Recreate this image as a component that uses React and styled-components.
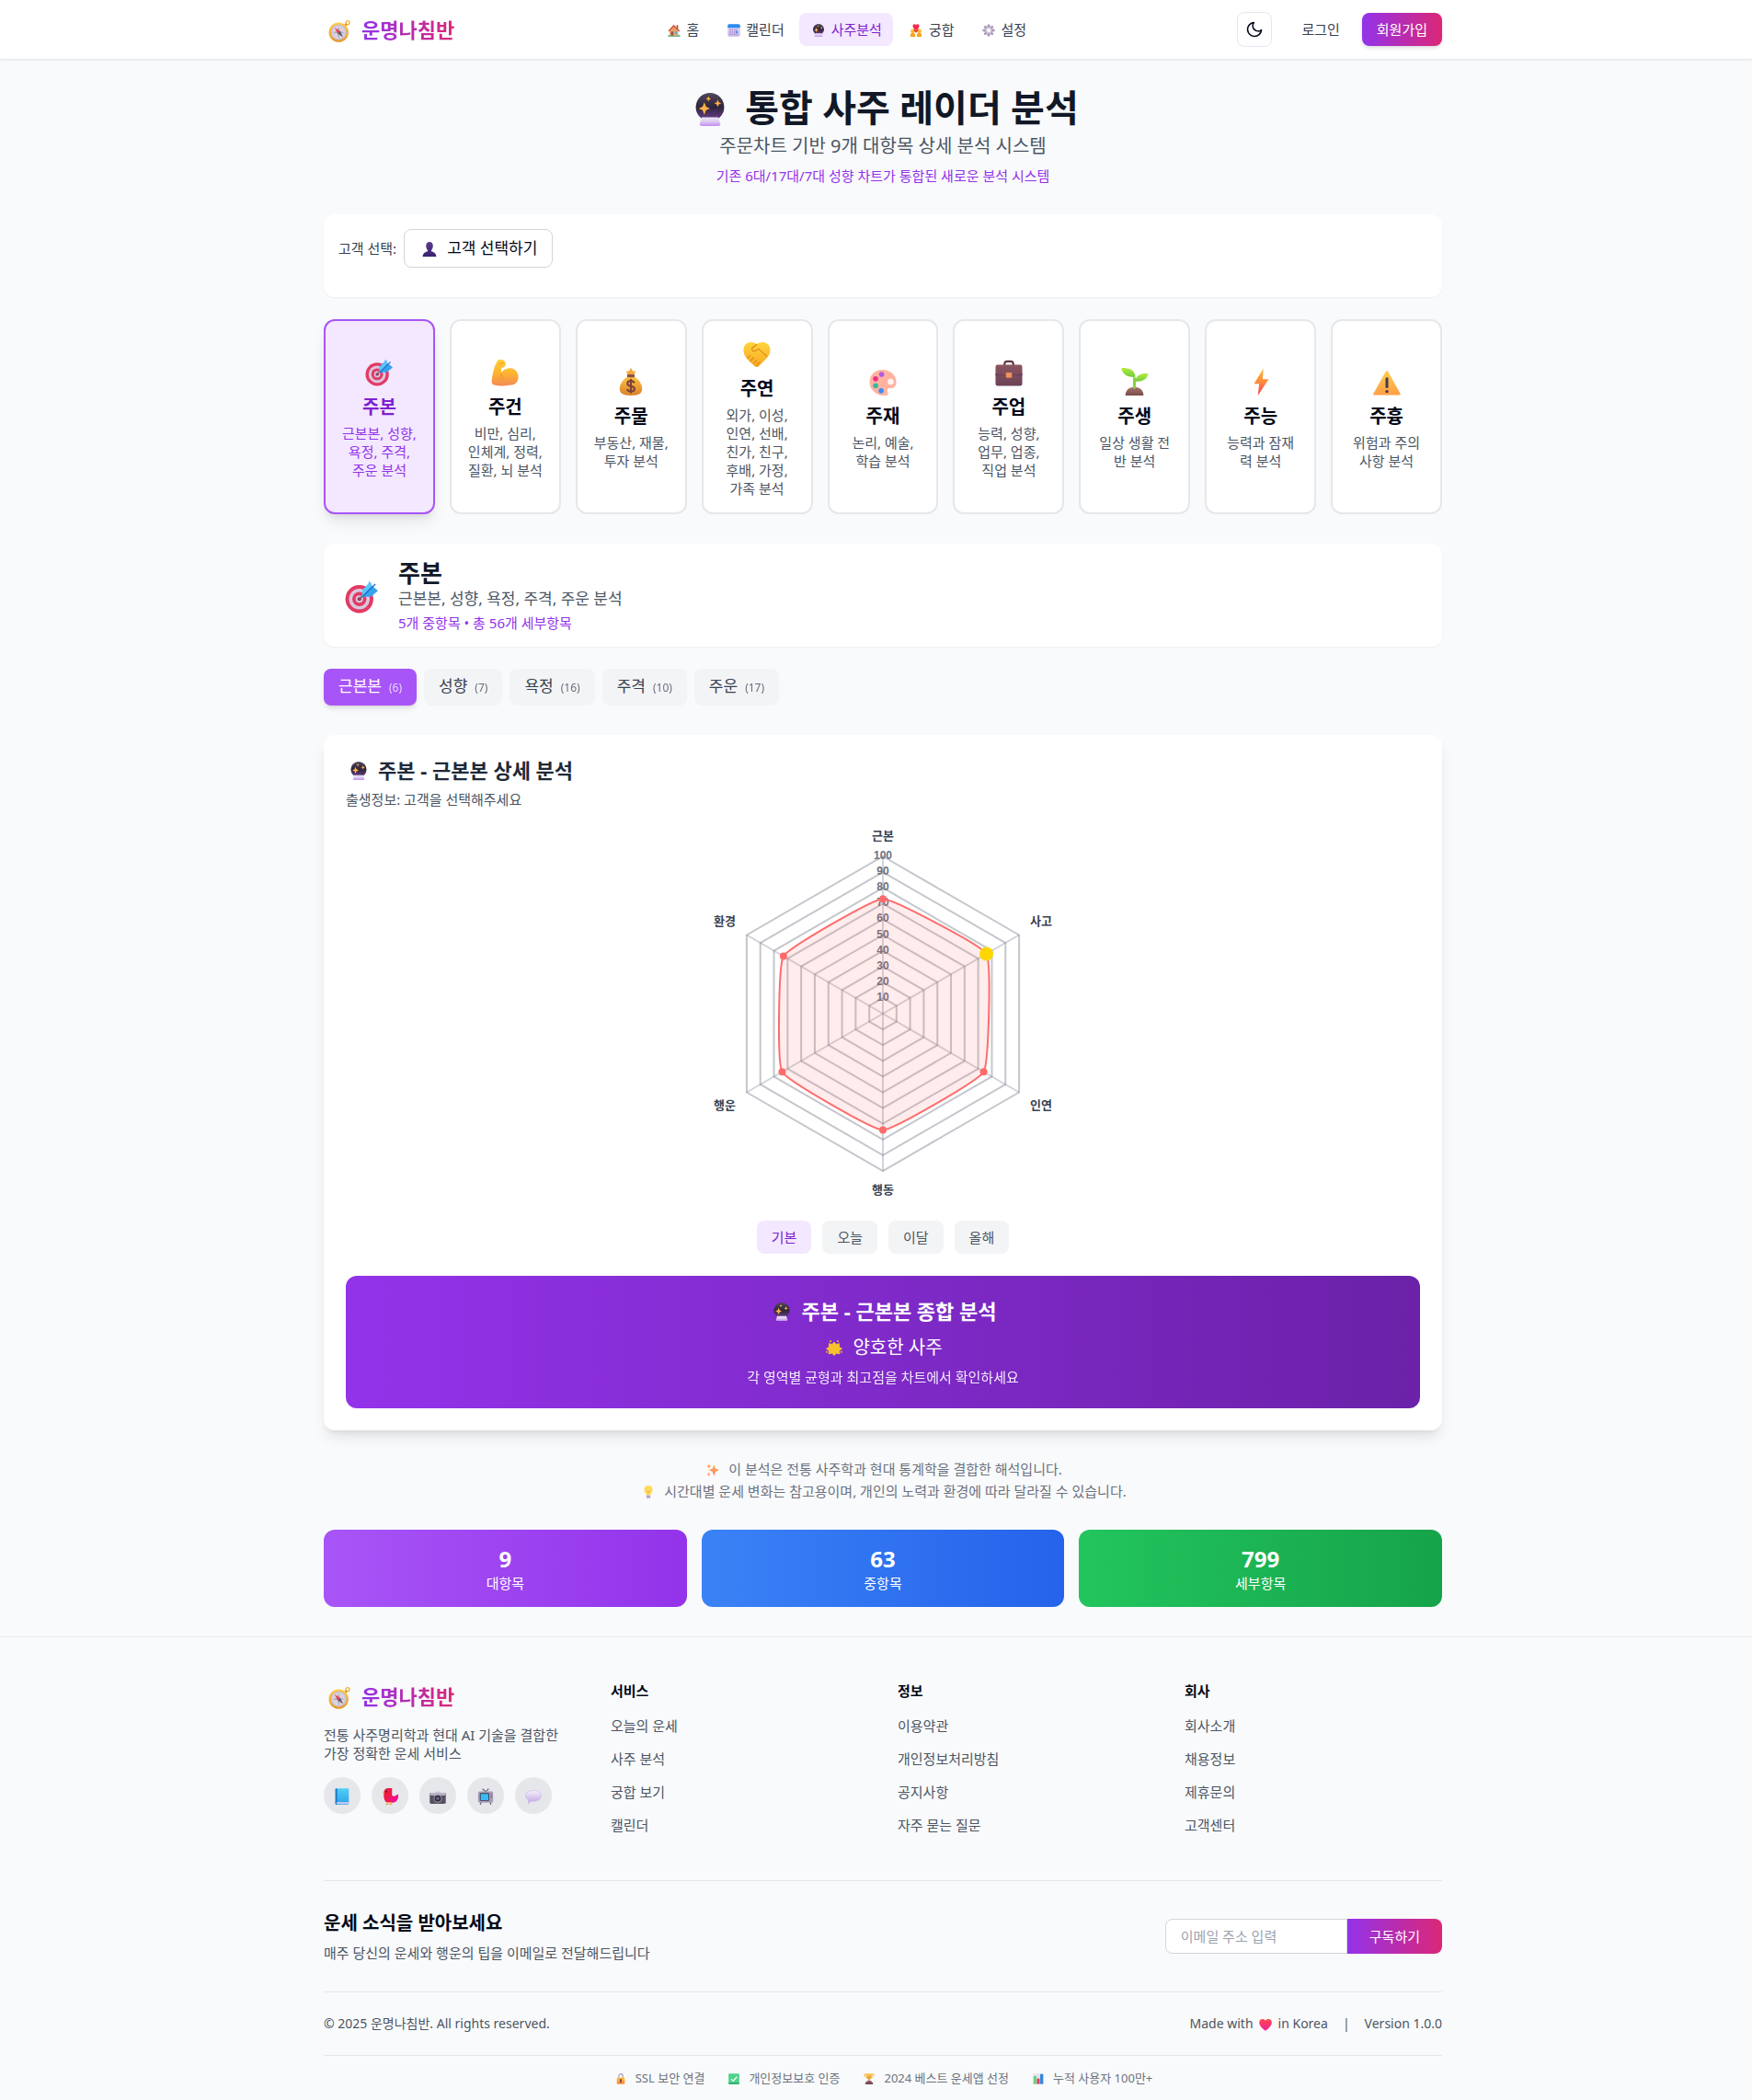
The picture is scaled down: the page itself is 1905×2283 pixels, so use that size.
import React from "react";
import styled, { createGlobalStyle, css } from "styled-components";

const GlobalStyle = createGlobalStyle`
  *, *::before, *::after { box-sizing: border-box; }
  body {
    margin: 0;
    background: #f9fafb;
    color: #020817;
    font-family: "Noto Sans", "Noto Sans CJK KR", sans-serif;
    font-size: 17px;
    line-height: 24px;
  }
  h1, h2, h3, h4, p, ul { margin: 0; padding: 0; }
  ul { list-style: none; }
  a { color: inherit; text-decoration: none; }
  button, input { font: inherit; color: inherit; }
  button { cursor: pointer; border: 0; background: none; padding: 0; }
`;

/* ---------- emoji drawings ---------- */

const gradients = {
  ball: ["#51465c", "#2f253c", "#6f4394"],
  base: ["#f0e8fb", "#dccbf0", "#c08df0"],
  gold: ["#ffc94a", "#e59a2e"],
  hand: ["#ffd43d", "#f9a825"],
  muscle: ["#ffcf3a", "#fdb52e", "#f58a55"],
  bag: ["#ffc240", "#d9822b"],
  flash: ["#ffb92e", "#ff8a3d", "#ee3f56"],
  warn: ["#ffcb4d", "#ff9f45"],
  red: ["#ff4a4a", "#f0209a"],
  leaf: ["#b5ea3c", "#6fcf3a"],
  soil: ["#a8736a", "#7a4d49"],
  book: ["#4fd0f7", "#2f9fea"],
  brief: ["#8b5560", "#6c4158"],
  spark: ["#ffb64a", "#ff8070"],
  bubble: ["#f6f0fc", "#bda3e2"],
  cal: ["#e8e0f6", "#c9b8ea"],
  lock: ["#ffc53d", "#ff8146"],
  person: ["#5b3a8c", "#3a2170"],
};

const GradientSheet = styled.svg`
  position: absolute;
  width: 0;
  height: 0;
`;

const Gradients = () => (
  <GradientSheet aria-hidden="true">
    <defs>
      {Object.entries(gradients).map(([id, stops]) => (
        <linearGradient key={id} id={`g-${id}`} x1="0" y1="0" x2="0" y2="1">
          {stops.map((c, i) => (
            <stop key={c} offset={i / (stops.length - 1)} stopColor={c} />
          ))}
        </linearGradient>
      ))}
    </defs>
  </GradientSheet>
);

const drawings = {
  compass: (
    <>
      <circle cx="28" cy="3.5" r="2.6" fill="none" stroke="#efb23c" strokeWidth="1.8" />
      <path d="M23 9l3.5-3.5" stroke="#d98f2c" strokeWidth="3" />
      <circle cx="15" cy="17.5" r="12.8" fill="#d9d2dc" stroke="url(#g-gold)" strokeWidth="3" />
      <circle cx="15" cy="17.5" r="10.4" fill="none" stroke="#b9aec2" strokeWidth="1" />
      <path d="M15 8.5l1.6 7.4 7.4 1.6-7.4 1.6L15 26.5l-1.6-7.4L6 17.5l7.4-1.6z" fill="#a79db0" />
      <path d="M9 10.5l8.2 5.4-3.6 3.2z" fill="#f03a4f" />
      <path d="M21.500 24.500l-7.900-5.400 3.600-3.200z" fill="#5d5566" />
    </>
  ),
  home: (
    <>
      <rect x="1" y="28" width="30" height="3.500" fill="#3fae7c" />
      <rect x="22" y="3" width="4" height="9" fill="#b0553f" />
      <path d="M5 16L15 5l11 11v13H5z" fill="#e9a26b" />
      <path d="M1 17L15 1.500 30.500 17l-2.500 2.500L15 7 3.500 19.500z" fill="#d4543f" />
      <rect x="8" y="19" width="6" height="10" fill="#9a5340" />
      <rect x="17.500" y="19" width="6" height="6" fill="#4fb8e8" />
    </>
  ),
  calendar: (
    <>
      <rect x="0.500" y="0.500" width="31" height="31" rx="4" fill="url(#g-cal)" />
      <path d="M.5 9.500v-5a4 4 0 014-4h23a4 4 0 014 4v5z" fill="#2b8cf0" />
      <g fill="#a98fd6">
        {[13, 18.500, 24].map((y) => [5, 10.500, 16, 21.500].map((x) => <rect key={`${x}-${y}`} x={x} y={y} width="3.500" height="3.500" />))}
      </g>
      <rect x="21" y="18" width="4.500" height="4.500" fill="#2b8cf0" />
    </>
  ),
  crystal: (
    <>
      <circle cx="16" cy="13.700" r="13.700" fill="url(#g-ball)" />
      <path d="M8 23.500h16l2 6.500q.3 2-2 2H8q-2.300 0-2-2z" fill="url(#g-base)" />
      <g fill="#ffb145">
        <path d="M10.500 9l1.700 4.300 3.800 1.700-3.800 1.700-1.700 4.300-1.700-4.300L5 15l3.800-1.700z" />
        <path d="M23.500 6.500l1 2.500 2.500 1-2.500 1-1 2.500-1-2.500-2.500-1 2.500-1z" />
        <path d="M14.500 3l.8 1.900 1.700.8-1.700.8-.8 1.900-.8-1.900-1.700-.8 1.700-.8z" />
      </g>
    </>
  ),
  couple: (
    <>
      <path d="M16 15C9 11 8 8 8 5.500A4 4 0 0116 4a4 4 0 018 1.500C24 8 23 11 16 15z" fill="#f5264e" />
      <circle cx="8" cy="17.500" r="5.500" fill="url(#g-hand)" />
      <circle cx="24" cy="17.500" r="5.500" fill="url(#g-hand)" />
      <path d="M2 32v-4a6 6 0 0112 0v4zM18 32v-4a6 6 0 0112 0v4z" fill="#f6a31f" />
      <path d="M12 11l4 5 4-5 2 5-6 6-6-6z" fill="#e63a3f" />
    </>
  ),
  gear: (
    <>
      <g fill="#a99bb8">
        {[0, 45, 90, 135].map((a) => (
          <rect key={a} x="13" y="1" width="6" height="30" rx="1.500" transform={`rotate(${a} 16 16)`} />
        ))}
        <circle cx="16" cy="16" r="11" />
      </g>
      <circle cx="16" cy="16" r="8.500" fill="#cdc3d8" />
      <circle cx="16" cy="16" r="4.500" fill="#fff" />
    </>
  ),
  person: (
    <path
      d="M16 0c5 0 7.500 3.500 7.500 8.500 0 4-1.500 7.500-3.500 9.500v2.500c6 1.500 10 4 11 11.500H1c1-7.500 5-10 11-11.500V18c-2-2-3.500-5.500-3.500-9.500C8.500 3.500 11 0 16 0z"
      fill="url(#g-person)"
    />
  ),
  target: (
    <>
      <circle cx="14" cy="18" r="13.500" fill="#e33a63" />
      <circle cx="14" cy="18" r="10" fill="#d9c6de" />
      <circle cx="14" cy="18" r="6.800" fill="#e33a63" />
      <circle cx="14" cy="18" r="3.600" fill="#d9c6de" />
      <circle cx="14" cy="18" r="1.800" fill="#8b2f58" />
      <path d="M13.500 18.500l8-8" stroke="#7a5a78" strokeWidth="1.600" />
      <path d="M16.500 16l.5-7L23 3V.5l2.500 4L32 10l-6.500 5.500z" fill="#36a3ee" />
      <path d="M25.500 1.500L23 3l-6 6-.5 7 9-10z" fill="#5cc4f8" />
      <path d="M17 15.500L29.500 3.500" stroke="#1c6fc9" strokeWidth="1.200" />
    </>
  ),
  muscle: (
    <>
      <path
        d="M8 1.500c3-1.500 7-.5 8.500 2.500 1 2.500.2 5-2 6l-2.500.3-.3 6C14 13 18 10.500 22.500 11 28 11.500 31.500 16 31.500 21S29 29.500 24 30.500c-7 1.200-16 1.200-21.500-.5-2-.8-2-3-1.600-6C2 16 3.500 8 8 1.500z"
        fill="url(#g-muscle)"
      />
      <path d="M11.700 16.300c-.3 3 .8 5.500 3.300 7" stroke="#ec9a25" strokeWidth="1.200" fill="none" />
      <path d="M9 5.500c2.500.5 4.500 0 6-1.500" stroke="#ec9a25" strokeWidth="1.100" fill="none" />
    </>
  ),
  money: (
    <>
      <path d="M10.500 3.500l3 .5L16 0l2.500 4 3-.5-2 5.500h-7z" fill="#f8a73a" />
      <path d="M12 10h8c6 4 9 9 9 14 0 5-3 8-13 8S3 29 3 24c0-5 3-10 9-14z" fill="url(#g-bag)" />
      <rect x="11.500" y="7.500" width="9" height="3.500" rx="1.500" fill="#8d5347" />
      <path
        d="M20 17.500c-.6-1.700-2-2.500-4-2.500-2.300 0-4 1-4 3s1.500 2.600 4 3 4.200 1.200 4.200 3.200-1.800 3-4.200 3c-2.200 0-3.800-.8-4.300-2.700M16 12.800v16.500"
        fill="none"
        stroke="#7a4238"
        strokeWidth="2.200"
      />
    </>
  ),
  handshake: (
    <>
      <path
        d="M9 2c3 0 5 .8 7 2.500C18 2.800 20 2 23 2c5 0 8.500 4 8.500 9 0 4.500-2 7.500-5 10.500L18 30c-1.500 1.300-3 1.300-4.500 0L5 22C2 19 .5 15.500.5 11 .5 6 4 2 9 2z"
        fill="url(#g-hand)"
      />
      <path
        d="M16 4.500L10.500 9c-1 3 1.500 4.500 4 3l3.500-2 9.500 8.500M8 17.500l-2.500 3M12 20l-3.500 4M15.500 23l-3 3.500M19 25.500l-2.500 3"
        fill="none"
        stroke="#e08c14"
        strokeWidth="1.300"
        strokeLinecap="round"
      />
    </>
  ),
  palette: (
    <>
      <path
        d="M15 2c9.500 0 16.500 6 16.500 14 0 5-2.500 7.500-6 7.500-2.500 0-4.500 0-4.500 2.500 0 2 1 2.500 1 4s-1.500 2-4 2C8 32 .5 25 .5 16.500S7 2 15 2z"
        fill="#ffb3a0"
      />
      <circle cx="25" cy="16" r="3.500" fill="#fff6f3" />
      <circle cx="14.500" cy="7.500" r="3" fill="#b05ae8" />
      <circle cx="7.500" cy="12.500" r="3" fill="#ec2f8a" />
      <circle cx="7.500" cy="20.500" r="3" fill="#34b9a0" />
      <circle cx="14" cy="26.500" r="3" fill="#3b8df5" />
    </>
  ),
  briefcase: (
    <>
      <path d="M11 8V5.500A3 3 0 0114 3h4a3 3 0 013 2.500V8" fill="none" stroke="#5f3947" strokeWidth="2.400" />
      <rect x="0.500" y="7" width="31" height="24.500" rx="2.500" fill="url(#g-brief)" />
      <path d="M.5 17v2.500h31V17q-4 2-15.500 2T.5 17z" fill="#6a3a5a" />
      <rect x="12.500" y="16" width="7" height="6" rx="1" fill="#f0905a" />
    </>
  ),
  seedling: (
    <>
      <path d="M5 32c0-6 4-10 10.500-10S26 26 26 32z" fill="url(#g-soil)" />
      <path d="M15.500 24V11" stroke="#86d23a" strokeWidth="3.200" />
      <path d="M.5 0C10 0 16 2 16.500 10.500 7 11 1 7 .5 0z" fill="url(#g-leaf)" />
      <path d="M31.500 6.500C24 5.500 17.500 8 16 15.500c7.500 1 14-1.500 15.500-9z" fill="url(#g-leaf)" />
    </>
  ),
  flash: <path d="M19 .5L8 18.500h6L12.500 32 25 13h-7z" fill="url(#g-flash)" />,
  warning: (
    <>
      <path d="M14.500 4.500q1.500-2.500 3 0l14 25q1 2-1.500 2H2q-2.500 0-1.500-2z" fill="url(#g-warn)" />
      <rect x="14.400" y="11" width="3.200" height="12.500" rx="1.600" fill="#45394f" />
      <circle cx="16" cy="27.300" r="1.800" fill="#45394f" />
    </>
  ),
  star: (
    <>
      <path
        d="M16 3.500l3.800 4.700 6.200-1.700-.3 6.500 5.300 3.500-5 3.500.5 6.500-6.300-1.500L16 29.500l-4.200-4.500-6.300 1.500.5-6.500-5-3.500 5.300-3.500L6 6.500l6.200 1.700z"
        fill="#f6c32c"
        stroke="#f6c32c"
        strokeWidth="1.500"
        strokeLinejoin="round"
      />
      <g fill="#f3b431">
        <circle cx="9" cy="2" r="1.800" />
        <circle cx="23" cy="2" r="1.800" />
        <circle cx="1.800" cy="22.500" r="1.800" />
        <circle cx="30.200" cy="22.500" r="1.800" />
      </g>
    </>
  ),
  sparkles: (
    <g fill="url(#g-spark)">
      <path d="M19 3l4 9.500 9 4-9 4L19 31l-4-10.500-9-4 9-4z" />
      <path d="M6.500 1l1.800 4.200L12.500 7 8.300 8.800 6.500 13 4.700 8.800.5 7l4.200-1.800z" />
      <path d="M6 22l1.500 3.500L11 27l-3.500 1.500L6 32l-1.500-3.500L1 27l3.500-1.500z" />
    </g>
  ),
  bulb: (
    <>
      <path d="M16 0c6.500 0 10.500 4.500 10.500 10S22 18.500 21 24H11C10 18.500 5.500 15.500 5.500 10S9.500 0 16 0z" fill="#ffd95a" />
      <path d="M12 14l3 3 1-3 1 3 3-3" stroke="#f59a2e" strokeWidth="1.500" fill="none" />
      <rect x="11" y="24" width="10" height="7.500" rx="2" fill="#b9a3d0" />
    </>
  ),
  book: (
    <>
      <rect x="3" y="0.500" width="26" height="31" rx="2" fill="url(#g-book)" />
      <rect x="3" y="0.500" width="3.500" height="31" rx="1.500" fill="#1c7bc4" />
      <rect x="5.500" y="27" width="23.500" height="3" fill="#d9cdf0" />
    </>
  ),
  parrot: (
    <>
      <path d="M4 12C3 5 7 0 12 0h8v14l4 2 8-4c0 9-3 15-10 15.500H10C5.500 25.500 4 19 4 12z" fill="#ef1846" />
      <path d="M20 14v5l12-7c0 9-3 15-10 15.500-6-.5-8-5-8-11z" fill="#f50f8b" />
      <path d="M5 6L1.500 9 5 12z" fill="#f9a42d" />
      <path d="M11 26v4M17 26v4M8 31h5M15 31h5" stroke="#f3a03a" strokeWidth="2" />
      <circle cx="9" cy="6.500" r="1.500" fill="#3a1730" />
    </>
  ),
  camera: (
    <>
      <rect x="10.500" y="6" width="11" height="6" rx="2" fill="#cfc8d8" />
      <rect x="0.500" y="9" width="31" height="21" rx="2.500" fill="#565060" />
      <rect x="0.500" y="9" width="31" height="5" rx="2.500" fill="#b9b1c4" />
      <circle cx="16" cy="20" r="8" fill="#a69fb0" />
      <circle cx="16" cy="20" r="6.300" fill="#332c40" />
      <circle cx="16" cy="20" r="3" fill="#6d6680" />
    </>
  ),
  tv: (
    <>
      <path d="M10 1l6 6M22 1l-6 6M8 26l-2.500 6M24 26l2.500 6" stroke="#5f5670" strokeWidth="2" />
      <rect x="1.500" y="6" width="29" height="22" rx="3" fill="#a79cb5" />
      <rect x="5" y="9.500" width="18" height="15" rx="2" fill="#2f3d52" />
      <rect x="6.500" y="11" width="15" height="12" rx="1" fill="#3cb9f2" />
      <circle cx="27" cy="12.500" r="1.400" fill="#e8304f" />
      <circle cx="27" cy="17" r="1.400" fill="#5f5670" />
    </>
  ),
  bubble: (
    <path
      d="M16 4.500c9 0 15 4 15 10.300S25 25.500 16 25.500c-1.500 0-3 0-4.200-.4L6 30l.5-7C3 21 1 18.300 1 14.800 1 8.500 7 4.500 16 4.500z"
      fill="url(#g-bubble)"
      stroke="#cbb5e8"
      strokeWidth="1"
    />
  ),
  heart: (
    <path d="M16 31.500C4.500 23.500.5 17 .5 10.500.5 5.500 4 2 8.500 2c3.200 0 6 1.500 7.500 4.500C17.500 3.500 20.300 2 23.500 2c4.500 0 8 3.500 8 8.500 0 6.500-4 13-15.500 21z" fill="url(#g-red)" />
  ),
  lock: (
    <>
      <path d="M10 14V8a6 6 0 0112 0v6" fill="none" stroke="#b3a6c0" strokeWidth="3.400" />
      <rect x="4.500" y="12" width="23" height="19.500" rx="3" fill="url(#g-lock)" />
      <path d="M16 18v7" stroke="#4d3450" strokeWidth="4" strokeLinecap="round" />
    </>
  ),
  check: (
    <>
      <rect x="0.500" y="0.500" width="31" height="31" rx="3" fill="#4fd18b" />
      <path d="M.5 29v-2h31v2q0 2.500-2 2.500H2.500q-2 0-2-2.500z" fill="#27a567" />
      <path d="M8 16.500l6 6L25 10" fill="none" stroke="#fff" strokeWidth="3.200" />
    </>
  ),
  trophy: (
    <>
      <path d="M8 3H2.500c0 6 2 9 7 10M24 3h5.500c0 6-2 9-7 10" fill="none" stroke="#f3a52f" strokeWidth="2.400" />
      <path d="M7 .5h18c0 10-2 16-9 17-7-1-9-7-9-17z" fill="url(#g-gold)" />
      <rect x="14" y="16" width="4" height="7" fill="#d98a2b" />
      <path d="M9 22h14v4h4v6H5v-6h4z" fill="#7d4a5c" />
    </>
  ),
  chart: (
    <>
      <rect x="1" y="0.500" width="30" height="31" rx="2" fill="#e5e0ef" />
      <rect x="2" y="8" width="8.500" height="23" fill="#63d47c" />
      <rect x="12" y="15" width="8" height="16" fill="#e8365f" />
      <rect x="21.500" y="2" width="8.500" height="29" fill="#2e86e0" />
    </>
  ),
};

const EmojiBox = styled.span`
  display: inline-flex;
  flex: none;
  justify-content: center;
  width: ${(p) => Math.round(p.$size * 1.36)}px;
  height: ${(p) => p.$size}px;
  margin: ${(p) => `${Math.round(p.$size / 15)}px 0 -${Math.round(p.$size / 15)}px`};

  svg { display: block; width: ${(p) => p.$size}px; height: ${(p) => p.$size}px; }
`;

const Emoji = ({ name, size = 14 }) => (
  <EmojiBox $size={size} aria-hidden="true">
    <svg viewBox="0 0 32 32">{drawings[name]}</svg>
  </EmojiBox>
);

/* ---------- shared layout ---------- */

const brandGradient = "linear-gradient(to right, #9333ea, #db2777)";

const frame = css`
  padding-left: 15px;
`;

const Container = styled.div`
  width: 100%;
  max-width: 1280px;
  margin: 0 auto;
  padding: 0 32px;
`;

const small = css`
  font-size: 15px;
  line-height: 20px;
`;

/* ---------- header ---------- */

const Header = styled.header`
  ${frame}
  background: #fff;
  border-bottom: 1px solid #e5e7eb;
  box-shadow: 0 1px 2px rgba(0, 0, 0, 0.05);
`;

const HeaderRow = styled(Container)`
  display: flex;
  align-items: center;
  justify-content: space-between;
  height: 64px;
`;

const LogoLink = styled.a`
  display: flex;
  align-items: center;
  gap: 8px;
  font-size: 22px;
  line-height: 32px;
  font-weight: 700;
`;

const LogoText = styled.span`
  background: ${brandGradient};
  background-clip: text;
  -webkit-background-clip: text;
  color: transparent;
`;

const Logo = () => (
  <LogoLink href="#home">
    <Emoji name="compass" size={24} />
    <LogoText>운명나침반</LogoText>
  </LogoLink>
);

const Nav = styled.nav`
  display: flex;
  gap: 4px;
`;

const NavLink = styled.a`
  ${small}
  display: flex;
  align-items: center;
  gap: 4px;
  padding: 8px 12px;
  border-radius: 8px;
  color: ${(p) => (p.$active ? "#7e22ce" : "#374151")};
  background: ${(p) => (p.$active ? "#f3e8ff" : "transparent")};
`;

const Actions = styled.div`
  display: flex;
  align-items: center;
  gap: 8px;
`;

const ThemeButton = styled.button`
  display: grid;
  place-items: center;
  width: 38px;
  height: 38px;
  margin-right: 8px;
  border: 1px solid #e2e8f0;
  border-radius: 8px;
  background: #fff;
`;

const LoginButton = styled.button`
  ${small}
  padding: 8px 16px;
  color: #374151;
`;

const SignupButton = styled.button`
  ${small}
  padding: 8px 16px;
  border-radius: 8px;
  color: #fff;
  background: ${brandGradient};
  box-shadow: 0 2px 4px rgba(0, 0, 0, 0.14);
`;

/* ---------- main ---------- */

const Main = styled.main`
  ${frame}
`;

const MainColumn = styled(Container)`
  display: flex;
  flex-direction: column;
  padding-top: 32px;
  padding-bottom: 32px;
`;

const Intro = styled.section`
  display: flex;
  flex-direction: column;
  align-items: center;
  gap: 8px;
  margin-bottom: 32px;
  text-align: center;
`;

const PageTitle = styled.h1`
  display: flex;
  align-items: center;
  gap: 14px;
  font-size: 40px;
  line-height: 40px;
  color: #111827;
`;

const Subtitle = styled.p`
  font-size: 20px;
  line-height: 28px;
  color: #4b5563;
`;

const PurpleNote = styled.p`
  ${small}
  color: #9333ea;
`;

const panel = css`
  border-radius: 12px;
  background: #fff;
  box-shadow: 0 1px 2px rgba(0, 0, 0, 0.05);
`;

const CustomerPanel = styled.section`
  ${panel}
  display: flex;
  align-items: center;
  gap: 8px;
  padding: 16px 16px 32px;
  margin-bottom: 24px;
`;

const CustomerLabel = styled.label`
  ${small}
  color: #374151;
`;

const CustomerButton = styled.button`
  display: flex;
  align-items: center;
  gap: 8px;
  padding: 8px 16px;
  border: 1px solid #d1d5db;
  border-radius: 8px;
  background: #fff;
`;

const CategoryGrid = styled.section`
  display: grid;
  grid-template-columns: repeat(9, 1fr);
  gap: 16px;
  margin-bottom: 32px;
`;

const CategoryCard = styled.button`
  display: flex;
  flex-direction: column;
  align-items: center;
  justify-content: center;
  min-width: 0;
  padding: 16px 17px;
  border: 2px solid ${(p) => (p.$active ? "#a855f7" : "#e5e7eb")};
  border-radius: 12px;
  background: ${(p) => (p.$active ? "#f3e8ff" : "#fff")};
  color: ${(p) => (p.$active ? "#7e22ce" : "#020817")};
  box-shadow: ${(p) => (p.$active ? "0 10px 15px -3px rgba(0,0,0,.1), 0 4px 6px -4px rgba(0,0,0,.1)" : "none")};
`;

const CategoryIcon = styled.span`
  display: flex;
  align-items: center;
  height: 36px;
  margin-bottom: 8px;
`;

const CategoryName = styled.span`
  font-size: 20px;
  line-height: 28px;
  font-weight: 700;
  margin-bottom: 4px;
`;

const CategoryText = styled.span`
  ${small}
  color: ${(p) => (p.$active ? "#9333ea" : "#4b5563")};
`;

const InfoPanel = styled.section`
  ${panel}
  display: flex;
  align-items: center;
  gap: 16px;
  padding: 16px;
  margin-bottom: 24px;
`;

const InfoTitle = styled.h2`
  font-size: 26px;
  line-height: 32px;
  color: #111827;
`;

const InfoText = styled.p`
  margin-bottom: 4px;
  color: #4b5563;
`;

const Tabs = styled.div`
  display: flex;
  gap: 8px;
  margin-bottom: 32px;
`;

const Tab = styled.button`
  height: 40px;
  padding: 0 16px;
  border-radius: 8px;
  color: ${(p) => (p.$active ? "#fff" : "#374151")};
  background: ${(p) => (p.$active ? "#a855f7" : "#f3f4f6")};
  box-shadow: ${(p) => (p.$active ? "0 4px 6px -1px rgba(0,0,0,.1), 0 2px 4px -2px rgba(0,0,0,.1)" : "none")};
`;

const TabCount = styled.span`
  margin-left: 8px;
  font-size: 12px;
  opacity: 0.75;
`;

const AnalysisCard = styled.section`
  padding: 24px;
  margin-bottom: 32px;
  border-radius: 12px;
  background: #fff;
  box-shadow: 0 10px 15px -3px rgba(0, 0, 0, 0.1), 0 4px 6px -4px rgba(0, 0, 0, 0.1);
`;

const CardTitle = styled.h3`
  display: flex;
  align-items: center;
  justify-content: ${(p) => (p.$center ? "center" : "flex-start")};
  gap: 8px;
  font-size: 22px;
  line-height: 28px;
  color: ${(p) => (p.$center ? "#fff" : "#1f2937")};
`;

const BirthInfo = styled.p`
  ${small}
  margin: 8px 0;
  color: #4b5563;
`;

const RadarSvg = styled.svg`
  display: block;
  width: 400px;
  height: 416px;
  margin: 0 auto;
  font-weight: 700;
  text-anchor: middle;
`;

const AxisLabel = styled.text`
  font-family: "Noto Sans CJK KR", sans-serif;
  font-size: 13px;
  fill: #374151;
`;

const TickLabel = styled.text`
  font-family: "Liberation Sans", sans-serif;
  font-size: 12px;
  fill: #6b7280;
`;

const PeriodRow = styled.div`
  display: flex;
  justify-content: center;
  gap: 12px;
  margin: 24px 0;
`;

const PeriodButton = styled.button`
  ${small}
  padding: 8px 16px;
  border-radius: 8px;
  color: ${(p) => (p.$active ? "#7e22ce" : "#4b5563")};
  background: ${(p) => (p.$active ? "#f3e8ff" : "#f3f4f6")};
`;

const SummaryBanner = styled.div`
  padding: 24px;
  border-radius: 12px;
  color: #fff;
  text-align: center;
  background: linear-gradient(to right, #9333ea, #6b21a8);
`;

const SummaryGrade = styled.p`
  display: flex;
  align-items: center;
  justify-content: center;
  gap: 8px;
  margin: 12px 0 8px;
  font-size: 20px;
  line-height: 28px;
`;

const SummaryText = styled.p`
  ${small}
  opacity: 0.9;
`;

const Notes = styled.section`
  display: flex;
  flex-direction: column;
  gap: 4px;
  margin-bottom: 32px;
  color: #6b7280;
`;

const Note = styled.p`
  ${small}
  display: flex;
  align-items: center;
  justify-content: center;
  gap: 8px;
`;

const StatGrid = styled.section`
  display: grid;
  grid-template-columns: repeat(3, 1fr);
  gap: 16px;
`;

const Stat = styled.div`
  padding: 16px;
  border-radius: 12px;
  color: #fff;
  text-align: center;
  background: linear-gradient(to right, ${(p) => p.$from}, ${(p) => p.$to});
`;

const StatValue = styled.div`
  font-size: 24px;
  line-height: 32px;
  font-weight: 700;
`;

const StatLabel = styled.div`
  ${small}
`;

/* ---------- footer ---------- */

const Footer = styled.footer`
  ${frame}
  border-top: 1px solid #e5e7eb;
`;

const FooterColumns = styled.div`
  display: grid;
  grid-template-columns: repeat(4, 1fr);
  gap: 32px;
  padding: 48px 0;
`;

const About = styled.p`
  ${small}
  margin: 16px 0;
  color: #4b5563;
`;

const SocialRow = styled.div`
  display: flex;
  gap: 12px;
`;

const SocialLink = styled.a`
  display: grid;
  place-items: center;
  width: 40px;
  height: 40px;
  border-radius: 50%;
  background: #e5e7eb;
`;

const FooterHeading = styled.h4`
  ${small}
  margin-bottom: 16px;
`;

const FooterLinks = styled.ul`
  display: grid;
  gap: 12px;
  font-size: 15px;
  line-height: 24px;
  color: #4b5563;
`;

const Newsletter = styled.section`
  display: flex;
  align-items: center;
  justify-content: space-between;
  padding: 32px 0;
  border-top: 1px solid #e5e7eb;
`;

const NewsletterTitle = styled.h3`
  margin-bottom: 8px;
  font-size: 20px;
  line-height: 28px;
`;

const NewsletterText = styled.p`
  ${small}
  color: #4b5563;
`;

const SubscribeForm = styled.form`
  ${small}
  display: flex;
`;

const EmailInput = styled.input`
  width: 198px;
  height: 38px;
  padding: 8px 16px;
  border: 1px solid #d1d5db;
  border-radius: 8px 0 0 8px;
  background: #fff;

  &::placeholder { color: #9ca3af; opacity: 1; }
`;

const SubscribeButton = styled.button`
  padding: 8px 24px;
  border-radius: 0 8px 8px 0;
  color: #fff;
  background: ${brandGradient};
`;

const Legal = styled.div`
  display: flex;
  align-items: center;
  justify-content: space-between;
  padding: 24px 0;
  border-top: 1px solid #e5e7eb;
  font-size: 14px;
  line-height: 20px;
  color: #4b5563;
`;

const LegalSide = styled.div`
  display: flex;
  gap: 16px;
`;

const MadeWith = styled.span`
  display: flex;
  align-items: center;
  gap: 4px;
`;

const Badges = styled.ul`
  display: flex;
  justify-content: center;
  gap: 24px;
  padding: 16px 0;
  border-top: 1px solid #e5e7eb;
  font-size: 13px;
  line-height: 16px;
  color: #6b7280;
`;

const Badge = styled.li`
  display: flex;
  align-items: center;
  gap: 8px;
`;

/* ---------- radar chart ---------- */

const CENTER = { x: 200, y: 199 };
const RADIUS = 171;
const TENSION = 0.1;
const axes = [
  { label: "근본", value: 73, x: 200, y: 10 },
  { label: "사고", value: 76, x: 372, y: 103 },
  { label: "인연", value: 74, x: 372, y: 303 },
  { label: "행동", value: 74, x: 200, y: 395 },
  { label: "행운", value: 74, x: 28, y: 303 },
  { label: "환경", value: 73, x: 28, y: 103 },
];

const pointAt = (index, value) => {
  const angle = (Math.PI / 3) * index - Math.PI / 2;
  const r = (RADIUS * value) / 100;
  return { x: CENTER.x + r * Math.cos(angle), y: CENTER.y + r * Math.sin(angle) };
};

const ring = (value) => axes.map((_, i) => pointAt(i, value)).map((p) => `${p.x},${p.y}`).join(" ");

const smoothPath = (points) => {
  const n = points.length;
  const handles = points.map((cur, i) => {
    const prev = points[(i + n - 1) % n];
    const next = points[(i + 1) % n];
    const a = Math.hypot(cur.x - prev.x, cur.y - prev.y);
    const b = Math.hypot(next.x - cur.x, next.y - cur.y);
    const fa = (TENSION * a) / (a + b);
    const fb = (TENSION * b) / (a + b);
    const dx = next.x - prev.x;
    const dy = next.y - prev.y;
    return {
      before: `${cur.x - fa * dx},${cur.y - fa * dy}`,
      after: `${cur.x + fb * dx},${cur.y + fb * dy}`,
    };
  });
  let d = `M${points[0].x},${points[0].y}`;
  for (let i = 0; i < n; i += 1) {
    const j = (i + 1) % n;
    d += `C${handles[i].after} ${handles[j].before} ${points[j].x},${points[j].y}`;
  }
  return `${d}Z`;
};

const steps = [10, 20, 30, 40, 50, 60, 70, 80, 90, 100];

const RadarChart = () => {
  const points = axes.map((axis, i) => pointAt(i, axis.value));
  const best = Math.max(...axes.map((axis) => axis.value));
  return (
    <RadarSvg viewBox="0 -16 400 416" role="img" aria-label="근본본 레이더 차트">
      <g fill="none" stroke="#6b7280" strokeOpacity="0.4" strokeWidth="2">
        {steps.map((s) => (
          <polygon key={s} points={ring(s)} />
        ))}
      </g>
      <g stroke="#6b7280" strokeOpacity="0.3" strokeWidth="2">
        {axes.map((axis, i) => {
          const end = pointAt(i, 100);
          return <line key={axis.label} x1={CENTER.x} y1={CENTER.y} x2={end.x} y2={end.y} />;
        })}
      </g>
      {steps.map((s) => (
        <TickLabel key={s} x={CENTER.x} y={pointAt(0, s).y + 3}>
          {s}
        </TickLabel>
      ))}
      <path d={smoothPath(points)} fill="#ff6b6b" fillOpacity="0.13" stroke="#ff6b6b" strokeWidth="2" />
      {points.map((p, i) => (
        <circle
          key={axes[i].label}
          cx={p.x}
          cy={p.y}
          r={axes[i].value === best ? 7.5 : 4}
          fill={axes[i].value === best ? "#ffd700" : "#ff6b6b"}
        />
      ))}
      {axes.map((axis) => (
        <AxisLabel key={axis.label} x={axis.x} y={axis.y}>
          {axis.label}
        </AxisLabel>
      ))}
    </RadarSvg>
  );
};

/* ---------- content ---------- */

const navItems = [
  ["home", "홈"],
  ["calendar", "캘린더"],
  ["crystal", "사주분석"],
  ["couple", "궁합"],
  ["gear", "설정"],
];

const categories = [
  ["target", "주본", "근본본, 성향, 욕정, 주격, 주운 분석"],
  ["muscle", "주건", "비만, 심리, 인체계, 정력, 질환, 뇌 분석"],
  ["money", "주물", "부동산, 재물, 투자 분석"],
  ["handshake", "주연", "외가, 이성, 인연, 선배, 친가, 친구, 후배, 가정, 가족 분석"],
  ["palette", "주재", "논리, 예술, 학습 분석"],
  ["briefcase", "주업", "능력, 성향, 업무, 업종, 직업 분석"],
  ["seedling", "주생", "일상 생활 전반 분석"],
  ["flash", "주능", "능력과 잠재력 분석"],
  ["warning", "주흉", "위험과 주의사항 분석"],
];

const tabs = [
  ["근본본", 6],
  ["성향", 7],
  ["욕정", 16],
  ["주격", 10],
  ["주운", 17],
];

const stats = [
  ["9", "대항목", "#a855f7", "#9333ea"],
  ["63", "중항목", "#3b82f6", "#2563eb"],
  ["799", "세부항목", "#22c55e", "#16a34a"],
];

const footerColumns = [
  ["서비스", ["오늘의 운세", "사주 분석", "궁합 보기", "캘린더"]],
  ["정보", ["이용약관", "개인정보처리방침", "공지사항", "자주 묻는 질문"]],
  ["회사", ["회사소개", "채용정보", "제휴문의", "고객센터"]],
];

const socials = [
  ["book", "페이스북"],
  ["parrot", "트위터"],
  ["camera", "인스타그램"],
  ["tv", "유튜브"],
  ["bubble", "카카오톡"],
];

const badges = [
  ["lock", "SSL 보안 연결"],
  ["check", "개인정보보호 인증"],
  ["trophy", "2024 베스트 운세앱 선정"],
  ["chart", "누적 사용자 100만+"],
];

export default function App() {
  return (
    <>
      <GlobalStyle />
      <Gradients />
      <Header>
        <HeaderRow>
          <Logo />
          <Nav>
            {navItems.map(([icon, label]) => (
              <NavLink key={label} href={`#${icon}`} $active={icon === "crystal"}>
                <Emoji name={icon} />
                {label}
              </NavLink>
            ))}
          </Nav>
          <Actions>
            <ThemeButton type="button" aria-label="다크 모드">
              <svg width="20" height="20" viewBox="0 0 24 24" fill="none" stroke="currentColor" strokeWidth="2" strokeLinecap="round" strokeLinejoin="round">
                <path d="M21 12.790A9 9 0 1 1 11.210 3 7 7 0 0 0 21 12.790z" />
              </svg>
            </ThemeButton>
            <LoginButton type="button">로그인</LoginButton>
            <SignupButton type="button">회원가입</SignupButton>
          </Actions>
        </HeaderRow>
      </Header>

      <Main>
        <MainColumn>
          <Intro>
            <PageTitle>
              <Emoji name="crystal" size={36} />
              통합 사주 레이더 분석
            </PageTitle>
            <Subtitle>주문차트 기반 9개 대항목 상세 분석 시스템</Subtitle>
            <PurpleNote>기존 6대/17대/7대 성향 차트가 통합된 새로운 분석 시스템</PurpleNote>
          </Intro>

          <CustomerPanel>
            <CustomerLabel htmlFor="customer">고객 선택:</CustomerLabel>
            <CustomerButton id="customer" type="button">
              <Emoji name="person" size={16} />
              고객 선택하기
            </CustomerButton>
          </CustomerPanel>

          <CategoryGrid>
            {categories.map(([icon, name, text], i) => (
              <CategoryCard key={name} type="button" $active={i === 0}>
                <CategoryIcon>
                  <Emoji name={icon} size={30} />
                </CategoryIcon>
                <CategoryName>{name}</CategoryName>
                <CategoryText $active={i === 0}>{text}</CategoryText>
              </CategoryCard>
            ))}
          </CategoryGrid>

          <InfoPanel>
            <Emoji name="target" size={36} />
            <div>
              <InfoTitle>주본</InfoTitle>
              <InfoText>근본본, 성향, 욕정, 주격, 주운 분석</InfoText>
              <PurpleNote>5개 중항목 • 총 56개 세부항목</PurpleNote>
            </div>
          </InfoPanel>

          <Tabs>
            {tabs.map(([label, count], i) => (
              <Tab key={label} type="button" $active={i === 0}>
                {label}
                <TabCount>({count})</TabCount>
              </Tab>
            ))}
          </Tabs>

          <AnalysisCard>
            <CardTitle>
              <Emoji name="crystal" size={20} />
              주본 - 근본본 상세 분석
            </CardTitle>
            <BirthInfo>출생정보: 고객을 선택해주세요</BirthInfo>
            <RadarChart />
            <PeriodRow>
              {["기본", "오늘", "이달", "올해"].map((label, i) => (
                <PeriodButton key={label} type="button" $active={i === 0}>
                  {label}
                </PeriodButton>
              ))}
            </PeriodRow>
            <SummaryBanner>
              <CardTitle $center>
                <Emoji name="crystal" size={20} />
                주본 - 근본본 종합 분석
              </CardTitle>
              <SummaryGrade>
                <Emoji name="star" size={18} />
                양호한 사주
              </SummaryGrade>
              <SummaryText>각 영역별 균형과 최고점을 차트에서 확인하세요</SummaryText>
            </SummaryBanner>
          </AnalysisCard>

          <Notes>
            <Note>
              <Emoji name="sparkles" />
              이 분석은 전통 사주학과 현대 통계학을 결합한 해석입니다.
            </Note>
            <Note>
              <Emoji name="bulb" />
              시간대별 운세 변화는 참고용이며, 개인의 노력과 환경에 따라 달라질 수 있습니다.
            </Note>
          </Notes>

          <StatGrid>
            {stats.map(([value, label, from, to]) => (
              <Stat key={label} $from={from} $to={to}>
                <StatValue>{value}</StatValue>
                <StatLabel>{label}</StatLabel>
              </Stat>
            ))}
          </StatGrid>
        </MainColumn>
      </Main>

      <Footer>
        <Container>
          <FooterColumns>
            <div>
              <Logo />
              <About>
                전통 사주명리학과 현대 AI 기술을 결합한
                <br />
                가장 정확한 운세 서비스
              </About>
              <SocialRow>
                {socials.map(([icon, label]) => (
                  <SocialLink key={icon} href={`#${icon}`} aria-label={label}>
                    <Emoji name={icon} size={18} />
                  </SocialLink>
                ))}
              </SocialRow>
            </div>
            {footerColumns.map(([heading, links]) => (
              <div key={heading}>
                <FooterHeading>{heading}</FooterHeading>
                <FooterLinks>
                  {links.map((label) => (
                    <li key={label}>
                      <a href="#link">{label}</a>
                    </li>
                  ))}
                </FooterLinks>
              </div>
            ))}
          </FooterColumns>

          <Newsletter>
            <div>
              <NewsletterTitle>운세 소식을 받아보세요</NewsletterTitle>
              <NewsletterText>매주 당신의 운세와 행운의 팁을 이메일로 전달해드립니다</NewsletterText>
            </div>
            <SubscribeForm>
              <EmailInput type="email" placeholder="이메일 주소 입력" aria-label="이메일 주소" />
              <SubscribeButton type="button">구독하기</SubscribeButton>
            </SubscribeForm>
          </Newsletter>

          <Legal>
            <p>© 2025 운명나침반. All rights reserved.</p>
            <LegalSide>
              <MadeWith>
                Made with
                <Emoji name="heart" />
                in Korea
              </MadeWith>
              <span>|</span>
              <span>Version 1.0.0</span>
            </LegalSide>
          </Legal>

          <Badges>
            {badges.map(([icon, label]) => (
              <Badge key={icon}>
                <Emoji name={icon} size={12} />
                {label}
              </Badge>
            ))}
          </Badges>
        </Container>
      </Footer>
    </>
  );
}
